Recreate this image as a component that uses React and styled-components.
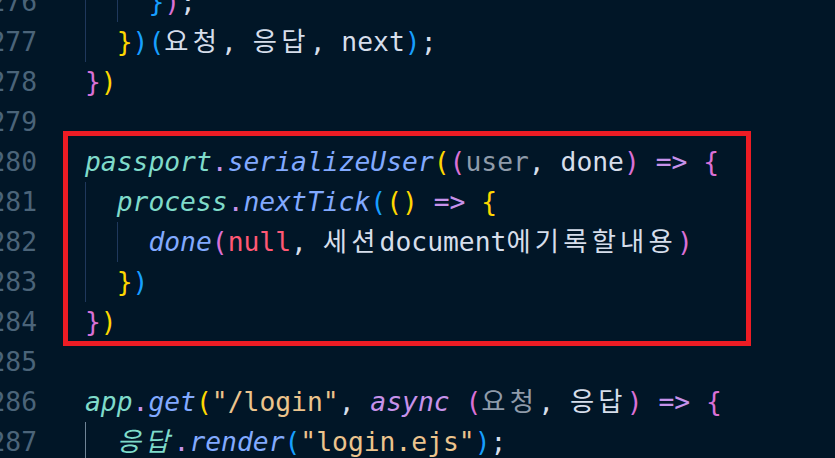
import styled, { createGlobalStyle } from "styled-components";

const GlobalStyle = createGlobalStyle`
  html, body {
    margin: 0;
    padding: 0;
    background: #011627;
  }
`;

const C = {
  fg: "#d6deeb",
  dim: "#8f9baa",
  vari: "#7fdbca",
  fn: "#82aaff",
  punc: "#c792ea",
  str: "#ecc48d",
  nul: "#ff5874",
  y: "#ffd700",
  p: "#da70d6",
  b: "#179fff",
};

const Screen = styled.div`
  position: relative;
  width: 835px;
  height: 458px;
  overflow: hidden;
  background: #011627;
`;

const Editor = styled.div`
  margin: -18px 0 0 -20px;
  display: flex;
  flex-direction: column;
  font-family: "DejaVu Sans Mono", "Noto Sans CJK KR", monospace;
  font-size: 26.33px;
  line-height: 40px;
`;

const Row = styled.div`
  display: flex;
  height: 40px;
`;

const LineNo = styled.div`
  width: 57px;
  flex-shrink: 0;
  text-align: right;
  color: #4b6479;
`;

const Code = styled.div`
  padding-left: 48px;
  white-space: pre;
  color: ${C.fg};
`;

const Indent = styled.span`
  display: inline-block;
  vertical-align: top;
  box-sizing: border-box;
  width: 2ch;
  height: 40px;
  border-left: 1px solid ${(p) => (p.$active ? "#6f8497" : "#1f385c")};
`;

const Tok = styled.span`
  color: ${(p) => C[p.$c] || C.fg};
  font-style: ${(p) => (p.$i ? "italic" : "normal")};
`;

const Ko = styled(Tok)`
  letter-spacing: 4.2px;
`;

const Highlight = styled.div`
  position: absolute;
  left: 63px;
  top: 131px;
  width: 688px;
  height: 215px;
  box-sizing: border-box;
  border: 5px solid #ed1c24;
  pointer-events: none;
`;

// [text, color, italic, korean]
const lines = [
  { n: 276, ind: [0, 0], t: [["}", "b"], [")", "p"], [";"]] },
  {
    n: 277,
    ind: [0],
    t: [
      ["}", "y"], [")", "b"], ["(", "b"], ["요청", "fg", 0, 1], [", "],
      ["응답", "fg", 0, 1], [", "], ["next"], [")", "b"], [";"],
    ],
  },
  { n: 278, t: [["}", "p"], [")", "y"]] },
  { n: 279, t: [] },
  {
    n: 280,
    t: [
      ["passport", "vari", 1], [".", "punc"], ["serializeUser", "fn", 1],
      ["(", "y"], ["(", "p"], ["user", "dim"], [", "], ["done"], [")", "p"],
      [" "], ["=>", "punc"], [" "], ["{", "p"],
    ],
  },
  {
    n: 281,
    ind: [0],
    t: [
      ["process", "vari", 1], [".", "punc"], ["nextTick", "fn", 1],
      ["(", "b"], ["(", "y"], [")", "y"], [" "], ["=>", "punc"], [" "], ["{", "y"],
    ],
  },
  {
    n: 282,
    ind: [0, 0],
    t: [
      ["done", "fn", 1], ["(", "p"], ["null", "nul"], [", "],
      ["세션", "fg", 0, 1], ["document"], ["에기록할내용", "fg", 0, 1], [")", "p"],
    ],
  },
  { n: 283, ind: [0], t: [["}", "y"], [")", "b"]] },
  { n: 284, t: [["}", "p"], [")", "y"]] },
  { n: 285, t: [] },
  {
    n: 286,
    t: [
      ["app", "vari", 1], [".", "punc"], ["get", "fn", 1], ["(", "y"],
      ['"/login"', "str"], [", "], ["async", "punc", 1], [" "], ["(", "p"],
      ["요청", "dim", 0, 1], [", "], ["응답", "fg", 0, 1], [")", "p"],
      [" "], ["=>", "punc"], [" "], ["{", "p"],
    ],
  },
  {
    n: 287,
    ind: [1],
    t: [
      ["응답", "vari", 1, 1], [".", "punc"], ["render", "fn", 1], ["(", "b"],
      ['"login.ejs"', "str"], [")", "b"], [";"],
    ],
  },
];

export default function App() {
  return (
    <>
      <GlobalStyle />
      <Screen>
        <Editor>
          {lines.map((line) => (
            <Row key={line.n}>
              <LineNo>{line.n}</LineNo>
              <Code>
                {(line.ind || []).map((a, i) => (
                  <Indent key={"i" + i} $active={a} />
                ))}
                {line.t.map(([text, c, it, ko], i) =>
                  ko ? (
                    <Ko key={i} $c={c} $i={it}>{text}</Ko>
                  ) : (
                    <Tok key={i} $c={c} $i={it}>{text}</Tok>
                  )
                )}
              </Code>
            </Row>
          ))}
        </Editor>
        <Highlight />
      </Screen>
    </>
  );
}
